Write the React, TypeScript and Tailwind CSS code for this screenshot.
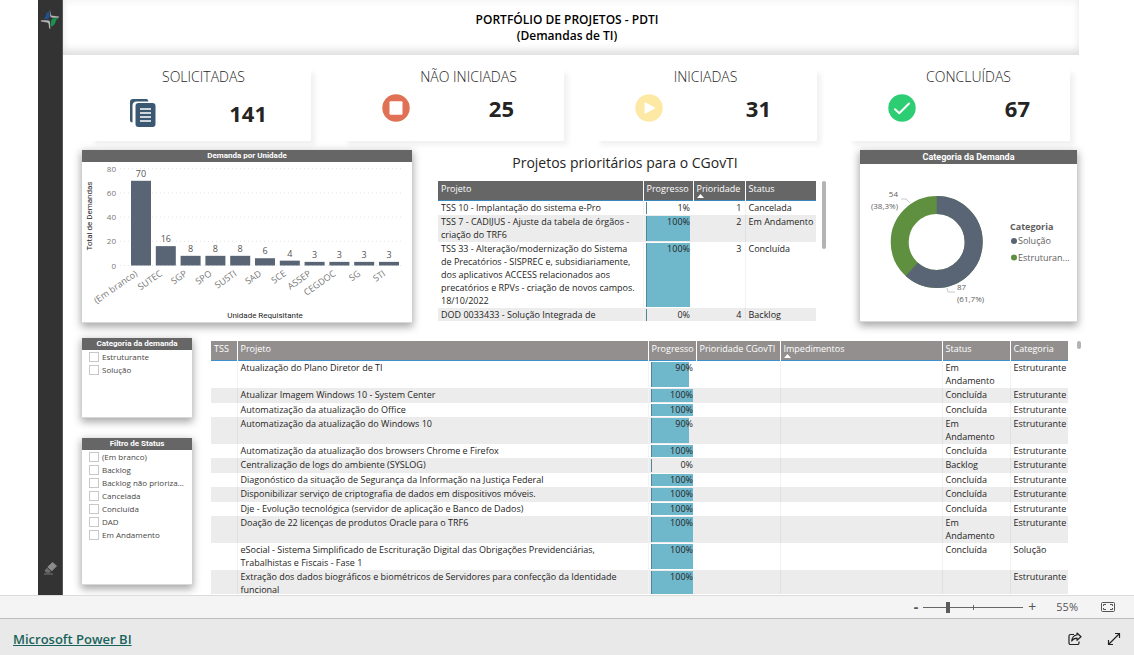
import React, { useState } from 'react';
import { clsx } from 'clsx';

type Unit = { name: string; total: number };
type Project = { name: string; progress: number; status: string; category: string };
type Priority = { name: string; progress: number; order: number; status: string };

const UNITS: Unit[] = [
  { name: '(Em branco)', total: 70 },
  { name: 'SUTEC', total: 16 },
  { name: 'SGP', total: 8 },
  { name: 'SPO', total: 8 },
  { name: 'SUSTI', total: 8 },
  { name: 'SAD', total: 6 },
  { name: 'SCE', total: 4 },
  { name: 'ASSEP', total: 3 },
  { name: 'CEGDOC', total: 3 },
  { name: 'SG', total: 3 },
  { name: 'STI', total: 3 },
];

const PRIORITIES: Priority[] = [
  { name: 'TSS 10 - Implantação do sistema e-Pro', progress: 1, order: 1, status: 'Cancelada' },
  { name: 'TSS 7 - CADIJUS - Ajuste da tabela de órgãos - criação do TRF6', progress: 100, order: 2, status: 'Em Andamento' },
  {
    name: 'TSS 33 - Alteração/modernização do Sistema de Precatórios - SISPREC e, subsidiariamente, dos aplicativos ACCESS relacionados aos precatórios e RPVs - criação de novos campos. 18/10/2022',
    progress: 100,
    order: 3,
    status: 'Concluída',
  },
  { name: 'DOD 0033433 - Solução Integrada de', progress: 0, order: 4, status: 'Backlog' },
];

const PROJECTS: Project[] = [
  { name: 'Atualização do Plano Diretor de TI', progress: 90, status: 'Em Andamento', category: 'Estruturante' },
  { name: 'Atualizar Imagem Windows 10 - System Center', progress: 100, status: 'Concluída', category: 'Estruturante' },
  { name: 'Automatização da atualização do Office', progress: 100, status: 'Concluída', category: 'Estruturante' },
  { name: 'Automatização da atualização do Windows 10', progress: 90, status: 'Em Andamento', category: 'Estruturante' },
  { name: 'Automatização da atualização dos browsers Chrome e Firefox', progress: 100, status: 'Concluída', category: 'Estruturante' },
  { name: 'Centralização de logs do ambiente (SYSLOG)', progress: 0, status: 'Backlog', category: 'Estruturante' },
  { name: 'Diagonóstico da situação de Segurança da Informação na Justiça Federal', progress: 100, status: 'Concluída', category: 'Estruturante' },
  { name: 'Disponibilizar serviço de criptografia de dados em dispositivos móveis.', progress: 100, status: 'Concluída', category: 'Estruturante' },
  { name: 'Dje - Evolução tecnológica (servidor de aplicação e Banco de Dados)', progress: 100, status: 'Concluída', category: 'Estruturante' },
  { name: 'Doação de 22 licenças de produtos Oracle para o TRF6', progress: 100, status: 'Em Andamento', category: 'Estruturante' },
  {
    name: 'eSocial - Sistema Simplificado de Escrituração Digital das Obrigações Previdenciárias, Trabalhistas e Fiscais - Fase 1',
    progress: 100,
    status: 'Concluída',
    category: 'Solução',
  },
  {
    name: 'Extração dos dados biográficos e biométricos de Servidores para confecção da Identidade funcional',
    progress: 100,
    status: '',
    category: 'Estruturante',
  },
];

const CopyIcon = () => (
  <svg viewBox="0 0 28 30" className="h-[30px] w-7" aria-hidden="true">
    <path d="M19 2.2A1.8 1.8 0 0 0 17.300 1H4A3 3 0 0 0 1 4v18a2.500 2.500 0 0 0 2.500 2.500V7A4 4 0 0 1 7.500 3.500H19.500z" fill="#3a5871" />
    <rect x="6.500" y="5" width="20" height="24" rx="3" fill="#3a5871" />
    <path d="M11 11h11M11 15h11M11 19h11M11 23h11" stroke="#fff" strokeWidth="1.500" />
  </svg>
);

const StopIcon = () => (
  <svg viewBox="0 0 28 28" className="size-7" aria-hidden="true">
    <circle cx="14" cy="14" r="13.700" fill="#e07155" />
    <rect x="7.500" y="7.200" width="13" height="13.500" rx="1" fill="#fff" />
  </svg>
);

const PlayIcon = () => (
  <svg viewBox="0 0 28 28" className="size-7" aria-hidden="true">
    <circle cx="14" cy="14" r="13.700" fill="#fde8a4" />
    <path d="M10 8.700v10.600l9.800-5.300z" fill="#fff" stroke="#fff" strokeLinejoin="round" />
  </svg>
);

const CheckIcon = () => (
  <svg viewBox="0 0 28 28" className="size-7" aria-hidden="true">
    <circle cx="14" cy="14" r="13.700" fill="#2dcd73" />
    <path d="M7 15.200l4.300 4.100L21 9.500" fill="none" stroke="#fff" strokeWidth="2" strokeLinecap="round" strokeLinejoin="round" />
  </svg>
);

const KPIS = [
  { label: 'SOLICITADAS', value: 141, icon: <CopyIcon />, title: 'pl-2', body: 'pt-[11px] pr-11' },
  { label: 'NÃO INICIADAS', value: 25, icon: <StopIcon />, title: 'pl-8', body: 'pt-[7px] pr-[50px]' },
  { label: 'INICIADAS', value: 31, icon: <PlayIcon />, title: 'pl-0', body: 'pt-[7px] pr-[46px]' },
  { label: 'CONCLUÍDAS', value: 67, icon: <CheckIcon />, title: 'pl-5', body: 'pt-[7px] pr-10' },
];

const Kpi = ({ kpi }: { kpi: (typeof KPIS)[number] }) => (
  <article className="h-[74px] bg-white shadow-[5px_5px_5px_-1px_#f1f1f1]">
    <h2 className={clsx('text-center text-sm leading-5 font-light text-[#252423]', kpi.title)}>{kpi.label}</h2>
    <div className={clsx('flex items-center justify-between pl-[41px]', kpi.body)}>
      {kpi.icon}
      <span className="text-[22px] leading-7 font-bold text-[#252423]">{kpi.value}</span>
    </div>
  </article>
);

type PanelProps = { title: string; className?: string; large?: boolean; children: React.ReactNode };

const Panel = ({ title, className, large, children }: PanelProps) => (
  <section className={clsx('border-b border-[#d9d9d9] bg-white shadow-[0_3px_8px_1px_#a8a8a8]', className)}>
    <h3 className={clsx('bg-[#666] text-center font-[Roboto] font-bold text-white', large ? 'text-[9px] leading-[14px]' : 'text-[8px] leading-3')}>
      {title}
    </h3>
    {children}
  </section>
);

const UnitChart = () => {
  const base = 103.5;
  const y = (v: number) => base - v * 1.21;
  return (
    <svg viewBox="0 0 330 160" className="w-full" role="img" aria-label="Demanda por Unidade">
      {[0, 20, 40, 60, 80].map((v) => (
        <g key={v}>
          <line x1="38" x2="320" y1={y(v)} y2={y(v)} stroke="#e3e3e3" strokeDasharray="1 3" />
          <text x="34" y={y(v) + 3} textAnchor="end" fontSize="8" fill="#777">{v}</text>
        </g>
      ))}
      {UNITS.map((u, i) => {
        const x = 49 + i * 24.8;
        return (
          <g key={u.name}>
            <rect x={x} y={y(u.total)} width="20" height={u.total * 1.21} fill="#596475" />
            <text x={x + 10} y={y(u.total) - 4} textAnchor="middle" fontSize="9" fill="#555">{u.total}</text>
            <text transform={`translate(${x + 7} 113) rotate(-35)`} textAnchor="end" fontSize="9" fill="#777">{u.name}</text>
          </g>
        );
      })}
      <text transform="translate(10 54) rotate(-90)" textAnchor="middle" fontFamily="Roboto" fontSize="8" fill="#252423">Total de Demandas</text>
      <text x="183" y="156" textAnchor="middle" fontFamily="Roboto" fontSize="8" fill="#252423">Unidade Requisitante</text>
    </svg>
  );
};

const CategoryDonut = () => {
  const circumference = 2 * Math.PI * 37;
  return (
    <svg viewBox="0 0 217 157" className="w-full" role="img" aria-label="Categoria da Demanda">
      <g fill="none" strokeWidth="18" transform="rotate(-90 76.700 78)">
        <circle cx="76.700" cy="78" r="37" stroke="#5f9040" />
        <circle cx="76.700" cy="78" r="37" stroke="#596475" strokeDasharray={`${circumference * 0.617} ${circumference}`} />
      </g>
      <path d="M41 35h5l4 4M87 124l1 4h7" fill="none" stroke="#c8c8c8" />
      <g fontSize="8" fill="#605e5c">
        <text x="38" y="33" textAnchor="end">54</text>
        <text x="38" y="45" textAnchor="end">(38,3%)</text>
        <text x="97" y="126">87</text>
        <text x="97" y="138">(61,7%)</text>
      </g>
      <g fontSize="9" fill="#605e5c">
        <text x="150" y="66" fontWeight="700">Categoria</text>
        <text x="158" y="80">Solução</text>
        <text x="158" y="97">Estruturan...</text>
      </g>
      <circle cx="154" cy="77" r="3" fill="#596475" />
      <circle cx="154" cy="93.500" r="3" fill="#5f9040" />
    </svg>
  );
};

const Filter = ({ title, options, className }: { title: string; options: string[]; className: string }) => (
  <Panel title={title} className={className}>
    <ul className="pl-[7px]">
      {options.map((option) => (
        <li key={option}>
          <label className="flex items-center gap-[3px] text-[8px] leading-[13px] whitespace-nowrap text-[#484644]">
            <input type="checkbox" className="size-[10px] shrink-0 appearance-none border border-[#c8c8c8] bg-white checked:bg-[#666]" />
            {option}
          </label>
        </li>
      ))}
    </ul>
  </Panel>
);

const SortArrow = () => (
  <svg viewBox="0 0 7 4" className="absolute bottom-0.5 left-[3px] h-1 w-[7px]" aria-hidden="true">
    <path d="M0 4L3.500 0 7 4z" fill="#fff" />
  </svg>
);

const Th = ({ children, sorted }: { children: React.ReactNode; sorted?: boolean }) => (
  <th scope="col" className="relative h-[19px] border-r border-white/25 px-[3px] pt-px text-left align-top leading-[14px] font-normal whitespace-nowrap last:border-r-0">
    {children}
    {sorted && <SortArrow />}
  </th>
);

const Progress = ({ value }: { value: number }) => (
  <td className="relative px-[3px] text-right">
    <div className="absolute inset-y-px right-[3px] left-0.5 border-l border-[#4f8796]">
      <div className="h-full bg-[#6fb7cb]" style={{ width: `${value > 1 ? value : 0}%` }} />
    </div>
    <span className="relative">{value}%</span>
  </td>
);

const rowClass = 'h-[14px] align-top even:h-[15px] even:bg-[#ececec]';
const cellClass = 'border-r border-black/5 px-[3px] pb-px last:border-r-0';

const PriorityTable = () => (
  <section className="min-w-0 flex-1">
    <h2 className="pt-1 pr-3.5 pb-[9px] text-center text-sm leading-[18px] font-normal text-[#252423]">Projetos prioritários para o CGovTI</h2>
    <div className="flex h-[140px] items-start gap-1.5 overflow-hidden">
      <table className="w-full table-fixed border-collapse text-[9px] leading-[13px] text-[#252423]">
        <colgroup>
          <col />
          <col className="w-[50px]" />
          <col className="w-[52px]" />
          <col className="w-[71px]" />
        </colgroup>
        <thead className="border-b border-[#3a86b8] bg-[#666] text-white">
          <tr>
            <Th>Projeto</Th>
            <Th>Progresso</Th>
            <Th sorted>Prioridade</Th>
            <Th>Status</Th>
          </tr>
        </thead>
        <tbody>
          {PRIORITIES.map((p) => (
            <tr key={p.order} className={rowClass}>
              <td className={cellClass}>{p.name}</td>
              <Progress value={p.progress} />
              <td className={clsx(cellClass, 'text-right')}>{p.order}</td>
              <td className={clsx(cellClass, 'whitespace-nowrap')}>{p.status}</td>
            </tr>
          ))}
        </tbody>
      </table>
      <div className="h-[68px] w-1 shrink-0 rounded-full bg-[#b3b3b3]" />
    </div>
  </section>
);

const ProjectTable = () => (
  <section className="flex h-[253px] min-w-0 flex-1 items-start gap-[9px] overflow-hidden">
    <table className="w-full table-fixed border-collapse text-[9px] leading-[13px] text-[#252423]">
      <colgroup>
        <col className="w-[26px]" />
        <col />
        <col className="w-[48px]" />
        <col className="w-[84px]" />
        <col className="w-[162px]" />
        <col className="w-[68px]" />
        <col className="w-[58px]" />
      </colgroup>
      <thead className="border-b border-[#3f8fcb] bg-[#938f8e] text-white">
        <tr>
          <Th>TSS</Th>
          <Th>Projeto</Th>
          <Th>Progresso</Th>
          <Th>Prioridade CGovTI</Th>
          <Th sorted>Impedimentos</Th>
          <Th>Status</Th>
          <Th>Categoria</Th>
        </tr>
      </thead>
      <tbody>
        {PROJECTS.map((p) => (
          <tr key={p.name} className={rowClass}>
            <td className={cellClass} />
            <td className={cellClass}>{p.name}</td>
            <Progress value={p.progress} />
            <td className={cellClass} />
            <td className={cellClass} />
            <td className={cellClass}>{p.status}</td>
            <td className={clsx(cellClass, 'whitespace-nowrap')}>{p.category}</td>
          </tr>
        ))}
      </tbody>
    </table>
    <div className="h-2 w-1 shrink-0 rounded-full bg-[#b3b3b3]" />
  </section>
);

const Sidebar = () => (
  <aside className="flex w-[25px] shrink-0 flex-col items-center justify-between border-r border-[#555] bg-[#333] pt-2 pb-5">
    <svg viewBox="0 0 20 22" className="h-[22px] w-5" aria-hidden="true">
      <path d="M9.300 3C8.500 4 6.500 4.500 6 6c-.4 2-.5 3.500-2.500 5H7c1.500 0 2.500-1 2.500-3z" fill="#24508f" />
      <path d="M9.800 1l1 5.500c.3 1 1 1.200 2 1.300l6.200.7-.5 1.300h-5.500c-1.800 0-2.700-.8-2.900-2.500z" fill="#b3b3b3" />
      <path d="M19 10.300c-2 1-2.800 1.500-3.300 3.200-.4 2-1.500 4-4.700 5.300v-4.500c0-2.500 1-3.800 3.500-4z" fill="#17934f" />
      <path d="M.8 12.300h6.500c2 0 2.700.8 2.800 2.500l.2 6.200-1.200-.8-.5-4.200c-.2-1-.6-1.400-1.600-1.600L1 13.500z" fill="#b3b3b3" />
    </svg>
    <button type="button" aria-label="Limpar filtros">
      <svg viewBox="0 0 15 14" className="h-[14px] w-[15px]" aria-hidden="true">
        <path d="M9.500 1.500l4 3.500-4.700 4.700-4-3.700z" fill="#8b8b8b" stroke="#8b8b8b" strokeLinejoin="round" />
        <path d="M4 6.800l3.900 3.600-1.400 1.400H3.300L1.500 9.800z" fill="#6f6f6f" />
        <path d="M1 13h9" stroke="#7a7a7a" />
      </svg>
    </button>
  </aside>
);

const ZoomBar = () => {
  const [zoom, setZoom] = useState(24);
  return (
    <div className="flex h-[23px] items-center justify-end border-t border-[#dcdcdc] bg-[#f4f4f4] pr-[19px] text-[#555]">
      <button type="button" aria-label="Reduzir" className="mr-[5px] text-sm leading-4 font-bold" onClick={() => setZoom(Math.max(0, zoom - 5))}>-</button>
      <div className="relative flex items-center">
        <input
          type="range"
          aria-label="Zoom"
          value={zoom}
          onChange={(e) => setZoom(Number(e.target.value))}
          className="h-3 w-[100px] appearance-none bg-[linear-gradient(#666,#666)] bg-[length:100%_1px] bg-center bg-no-repeat [&::-webkit-slider-thumb]:h-[11px] [&::-webkit-slider-thumb]:w-1 [&::-webkit-slider-thumb]:appearance-none [&::-webkit-slider-thumb]:bg-[#5c5c5c]"
        />
        <span className="pointer-events-none absolute left-1/2 h-[5px] w-px bg-[#666]" />
      </div>
      <button type="button" aria-label="Ampliar" className="ml-[5px] text-sm leading-4" onClick={() => setZoom(Math.min(100, zoom + 5))}>+</button>
      <span className="ml-5 text-[11px] leading-4">55%</span>
      <button type="button" aria-label="Ajustar à página" className="ml-[23px]">
        <svg viewBox="0 0 14 10" className="h-[10px] w-[14px]" fill="none" stroke="#555" aria-hidden="true">
          <rect x=".5" y=".5" width="13" height="9" rx="1" />
          <path d="M2.500 4V2.500H5M9 2.500h2.500V4M11.500 6v1.500H9M5 7.500H2.500V6" />
        </svg>
      </button>
    </div>
  );
};

const Footer = () => (
  <footer className="flex h-[37px] items-center justify-between border-t border-[#bdbdbd] bg-[#e9e9e9] pt-1 pr-[13px] pl-[13px]">
    <a href="#" className="text-[13px] leading-5 font-semibold text-[#18645c] underline">Microsoft Power BI</a>
    <div className="flex items-center gap-[25px]">
      <button type="button" aria-label="Compartilhar">
        <svg viewBox="0 0 14 14" className="size-3.5" fill="none" stroke="#222" strokeWidth="1.200" strokeLinejoin="round" aria-hidden="true">
          <path d="M6 2.500H2.500a1.500 1.500 0 0 0-1.500 1.500v7A1.500 1.500 0 0 0 2.500 12.500h7A1.500 1.500 0 0 0 11 11V9.500" />
          <path d="M9 1l4 3.700L9 8.300V6.200C6.500 6.200 5 7 3.700 9 4 5.500 6 3.300 9 3z" />
        </svg>
      </button>
      <button type="button" aria-label="Tela cheia">
        <svg viewBox="0 0 14 14" className="size-3.5" fill="none" stroke="#222" strokeWidth="1.200" aria-hidden="true">
          <path d="M1.500 12.500l11-11M8 1.500h4.500V6M1.500 8v4.500H6" />
        </svg>
      </button>
    </div>
  </footer>
);

export default function App() {
  return (
    <div className="flex min-h-screen flex-col bg-white font-['Open_Sans','Noto_Sans',sans-serif]">
      <div className="flex flex-1 pr-[53px] pl-[38px]">
        <Sidebar />
        <main className="min-w-0 flex-1">
          <header className="mr-0.5 h-[55px] pt-3 pr-2 text-center text-xs leading-4 font-semibold text-black shadow-[inset_0_-8px_8px_-4px_#dcdcdc,inset_0_0_10px_#eee]">
            <h1>
              PORTFÓLIO DE PROJETOS - PDTI
              <br />
              (Demandas de TI)
            </h1>
          </header>

          <div className="grid grid-cols-4 gap-[30px] pt-3 pr-[11px] pl-[25px]">
            {KPIS.map((kpi) => (
              <Kpi key={kpi.label} kpi={kpi} />
            ))}
          </div>

          <div className="flex items-start pt-[9px] pr-1 pl-[19px]">
            <Panel title="Demanda por Unidade" className="w-[330px] shrink-0">
              <UnitChart />
            </Panel>
            <div className="flex min-w-0 flex-1 pr-[34px] pl-[26px]">
              <PriorityTable />
            </div>
            <Panel title="Categoria da Demanda" className="w-[217px] shrink-0" large>
              <CategoryDonut />
            </Panel>
          </div>

          <div className="flex items-start gap-[19px] pt-[15px] pl-[19px]">
            <div className="flex w-[110px] shrink-0 flex-col gap-5">
              <Filter title="Categoria da demanda" options={['Estruturante', 'Solução']} className="h-20" />
              <Filter
                title="Filtro de Status"
                options={['(Em branco)', 'Backlog', 'Backlog não prioriza...', 'Cancelada', 'Concluída', 'DAD', 'Em Andamento']}
                className="h-[147px]"
              />
            </div>
            <div className="flex min-w-0 flex-1 pt-[3px]">
              <ProjectTable />
            </div>
          </div>
        </main>
      </div>
      <ZoomBar />
      <Footer />
    </div>
  );
}
